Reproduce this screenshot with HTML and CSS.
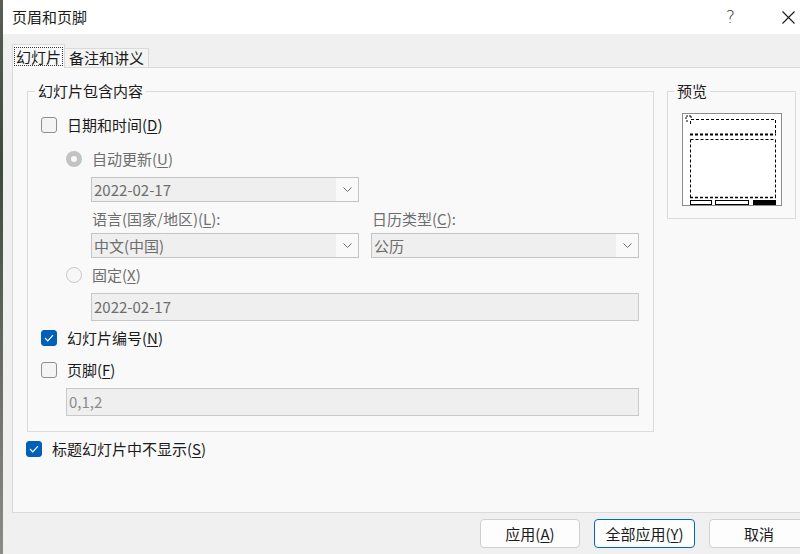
FILE: index.html
```html
<!DOCTYPE html>
<html lang="zh-CN">
<head>
<meta charset="utf-8">
<title>页眉和页脚</title>
<link rel="stylesheet" href="styles.css">
</head>
<body>
<div class="screen">
  <div class="strip"></div>
  <div class="window">
    <div class="titlebar">
      <span class="title">页眉和页脚</span>
      <span class="help">?</span>
      <svg class="close" width="13" height="13" viewBox="0 0 13 13"><path d="M0.5 0.5 L12.5 12.5 M12.5 0.5 L0.5 12.5" stroke="#1a1a1a" stroke-width="1.1" fill="none"/></svg>
    </div>
    <div class="tabs">
      <div class="tab active"><span class="focus">幻灯片</span></div>
      <div class="tab">备注和讲义</div>
    </div>
    <div class="panel">
      <div class="top-row">
        <fieldset class="group">
          <legend>幻灯片包含内容</legend>
          <div class="group-body">
            <div class="row r-date">
              <span class="check"></span><span class="lbl">日期和时间(<u>D</u>)</span>
            </div>
            <div class="row r-auto indent">
              <span class="radio on"></span><span class="lbl dis">自动更新(<u>U</u>)</span>
            </div>
            <div class="select wide m-dd1 indent2">
              <span class="sel-text">2022-02-17</span>
              <span class="sel-btn"><svg width="9" height="5" viewBox="0 0 9 5"><path d="M0.5 0.5 L4.5 4.5 L8.5 0.5" stroke="#6a6a6a" fill="none"/></svg></span>
            </div>
            <div class="pair m-lbl indent2">
              <span class="cap dis">语言(国家/地区)(<u>L</u>):</span>
              <span class="cap dis">日历类型(<u>C</u>):</span>
            </div>
            <div class="pair m-dd2 indent2">
              <div class="select wide">
                <span class="sel-text">中文(中国)</span>
                <span class="sel-btn"><svg width="9" height="5" viewBox="0 0 9 5"><path d="M0.5 0.5 L4.5 4.5 L8.5 0.5" stroke="#6a6a6a" fill="none"/></svg></span>
              </div>
              <div class="select wide">
                <span class="sel-text">公历</span>
                <span class="sel-btn"><svg width="9" height="5" viewBox="0 0 9 5"><path d="M0.5 0.5 L4.5 4.5 L8.5 0.5" stroke="#6a6a6a" fill="none"/></svg></span>
              </div>
            </div>
            <div class="row r-fixed indent">
              <span class="radio"></span><span class="lbl dis">固定(<u>X</u>)</span>
            </div>
            <div class="textbox m-tb1 indent2"><span class="tb-text">2022-02-17</span></div>
            <div class="row r-num">
              <span class="check on"><svg width="10" height="8" viewBox="0 0 10 8"><path d="M1 4 L3.8 6.8 L9 1.2" stroke="#fff" stroke-width="1.2" fill="none"/></svg></span><span class="lbl">幻灯片编号(<u>N</u>)</span>
            </div>
            <div class="row r-foot">
              <span class="check"></span><span class="lbl">页脚(<u>F</u>)</span>
            </div>
            <div class="textbox m-tb2 indent3"><span class="tb-text light">0,1,2</span></div>
          </div>
        </fieldset>
        <fieldset class="preview">
          <legend>预览</legend>
          <div class="preview-body">
            <svg width="100" height="93" viewBox="0 0 100 93">
              <rect x="0.5" y="0.5" width="99" height="92" fill="#fff" stroke="#8c8c8c"/>
              <path d="M4 6 V3 H9 M9 3 V6 M4 8 H7" stroke="#000" stroke-width="1" fill="none" stroke-dasharray="2 1"/>
              <path d="M8.5 11 V6.5 H93.5 V22" stroke="#000" stroke-width="1" fill="none" stroke-dasharray="3 2"/>
              <path d="M8 21.5 H94" stroke="#000" stroke-width="2" fill="none" stroke-dasharray="3 2"/>
              <path d="M8.5 26.5 H93.5 V84 M8.5 26.5 V84" stroke="#000" stroke-width="1" fill="none" stroke-dasharray="3 2"/>
              <path d="M8 84.5 H94" stroke="#000" stroke-width="1.5" fill="none" stroke-dasharray="3 2"/>
              <rect x="8.5" y="87.5" width="21" height="4" fill="#fff" stroke="#000"/>
              <rect x="33.5" y="87.5" width="33" height="4" fill="#fff" stroke="#000"/>
              <rect x="71" y="87" width="23" height="5" fill="#000"/>
            </svg>
          </div>
        </fieldset>
      </div>
      <div class="row r-title">
        <span class="check on"><svg width="10" height="8" viewBox="0 0 10 8"><path d="M1 4 L3.8 6.8 L9 1.2" stroke="#fff" stroke-width="1.2" fill="none"/></svg></span><span class="lbl">标题幻灯片中不显示(<u>S</u>)</span>
      </div>
    </div>
    <div class="buttons">
      <button class="btn b1">应用(<u>A</u>)</button>
      <button class="btn b2 default">全部应用(<u>Y</u>)</button>
      <button class="btn b3">取消</button>
    </div>
  </div>
</div>
</body>
</html>
```

FILE: styles.css
```css
* { box-sizing: border-box; }
html, body { margin: 0; padding: 0; }
body {
  width: 800px;
  height: 554px;
  overflow: hidden;
  font-family: "Noto Sans CJK SC", "Noto Sans", sans-serif;
  font-size: 15px;
  color: #1b1b1b;
}
u { text-decoration: underline; text-underline-offset: 2px; text-decoration-thickness: 1px; }

.screen { display: flex; width: 800px; height: 554px; }
.strip { width: 3px; background: linear-gradient(#5a5d58, #3d4a3e 30%, #6d6f6a 70%, #8a8c88); flex: none; }
.window { flex: 1; background: #f0f0f0; display: flex; flex-direction: column; min-width: 0; }

.titlebar {
  height: 34px;
  background: #ffffff;
  display: flex;
  align-items: center;
  padding-left: 9px;
  flex: none;
}
.title { line-height: 20px; flex: 1; }
.help { font-size: 17px; color: #333; margin-right: 47px; line-height: 20px; font-family: "DejaVu Sans", sans-serif; font-weight: 200; }
.close { margin-right: 5px; }

.tabs {
  margin-top: 10px;
  padding-left: 9px;
  display: flex;
  align-items: flex-end;
  height: 23px;
  flex: none;
}
.tab {
  height: 19px;
  line-height: 18px;
  padding: 0 4px;
  background: #f4f4f4;
  border: 1px solid #dadada;
  border-bottom: none;
  border-left: none;
}
.tab.active {
  background: #f9f9f9;
  border-left: 1px solid #dadada;
  padding: 2px 1px 0 1px;
  position: relative;
  z-index: 1;
  margin-bottom: -1px;
  height: 24px;
}
.focus {
  display: inline-block;
  border: 1px dotted #333;
  line-height: 17px;
  padding: 0 1px;
}

.panel {
  background: #f9f9f9;
  border: 1px solid #dadada;
  margin-left: 9px;
  margin-right: -10px;
  height: 446px;
  padding: 13px 0 0 14px;
  flex: none;
}
.top-row { display: flex; align-items: flex-start; gap: 13px; }

fieldset {
  margin: 0;
  padding: 0;
  border: 1px solid #dcdcdc;
  min-width: 0;
}
legend {
  padding: 0 3px;
  line-height: 20px;
  color: #1b1b1b;
}
.group { width: 627px; }
.group legend { margin-left: 7px; }
.group-body { padding: 12px 0 15px 13px; display: flex; flex-direction: column; }

.preview { width: 129px; }
.preview legend { margin-left: 6px; }
.preview-body { padding: 12px 0 12px 14px; }
.preview-body svg { display: block; }

.row { display: flex; align-items: center; height: 24px; }
.lbl { margin-left: 10px; line-height: 20px; }
.dis { color: #6e6e6e; }
.indent { padding-left: 25px; }
.indent2 { margin-left: 50px; }
.indent3 { margin-left: 25px; }

.r-auto { margin-top: 10px; }
.m-dd1 { margin-top: 6px; }
.m-lbl { margin-top: 7px; }
.m-dd2 { margin-top: 4px; }
.r-fixed { margin-top: 5px; }
.m-tb1 { margin-top: 6px; }
.r-num { margin-top: 5px; }
.r-foot { margin-top: 8px; }
.m-tb2 { margin-top: 6px; }
.r-title { margin-top: 5px; margin-left: -1px; }

.check {
  width: 16px; height: 16px;
  border: 1px solid #8f8f8f;
  border-radius: 3px;
  background: #f4f4f4;
  flex: none;
  display: flex; align-items: center; justify-content: center;
}
.check.on { background: #005fb8; border-color: #005fb8; }

.radio {
  width: 16px; height: 16px;
  border-radius: 50%;
  border: 1px solid #c9c9c9;
  background: #f7f7f7;
  flex: none;
}
.radio.on {
  border: 5px solid #c3c3c3;
  background: #f8f8f8;
}

.select {
  height: 25px;
  border: 1px solid #c5c5c5;
  display: flex;
  background: #efefef;
}
.select.wide { width: 268px; }
.sel-text { flex: 1; line-height: 23px; padding-left: 2px; color: #6d6d6d; }
.sel-btn { width: 22px; background: #f9f9f9; display: flex; align-items: center; justify-content: center; }

.pair { display: flex; gap: 12px; }
.cap { width: 268px; line-height: 20px; padding-left: 1px; }

.textbox {
  height: 28px;
  border: 1px solid #c8c8c8;
  background: #efefef;
  display: flex;
  align-items: center;
}
.m-tb1 { width: 548px; }
.m-tb2 { width: 573px; }
.tb-text { padding-left: 2px; color: #6d6d6d; line-height: 20px; }
.tb-text.light { color: #8c8c8c; }

.buttons {
  margin-top: 6px;
  display: flex;
  justify-content: flex-end;
  gap: 14px;
  margin-right: -9px;
}
.btn {
  height: 29px;
  width: 100px;
  border: 1px solid #d0d0d0;
  border-radius: 4px;
  background: #fdfdfd;
  font: inherit;
  color: #1b1b1b;
  line-height: 20px;
  padding: 0;
}
.btn.b2 { width: 101px; }
.btn.default { border-color: #0067c0; }
```
